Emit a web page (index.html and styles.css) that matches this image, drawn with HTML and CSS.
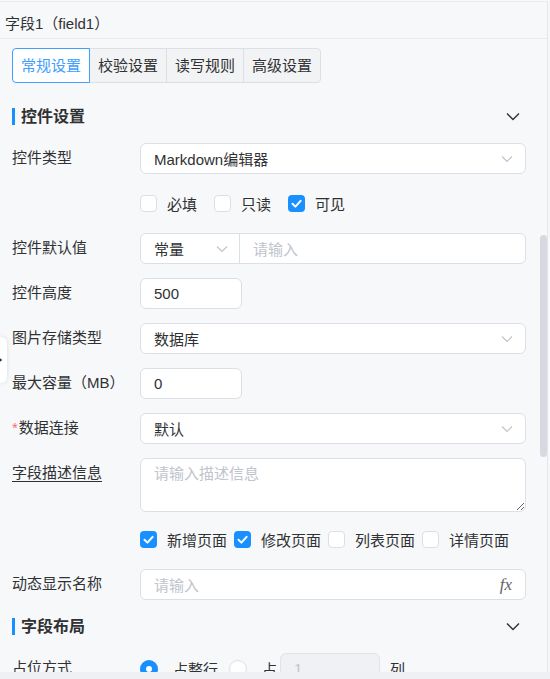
FILE: index.html
```html
<html>
    <head>
        <link rel="stylesheet" href="styles.css">
    </head>
    <body>
        <div class="panel">
            <div class="panel-head">字段1（field1）</div>

            <div class="panel-body">
                <div class="tabs">
                    <div class="tab is-active">常规设置</div>
                    <div class="tab">校验设置</div>
                    <div class="tab">读写规则</div>
                    <div class="tab">高级设置</div>
                </div>

                <!-- control settings -->
                <div class="section-head">
                    <span class="section-title">控件设置</span>
                    <svg class="section-arrow" width="14" height="14" viewBox="0 0 14 14"><path d="M1 4.5 L7 10.5 L13 4.5"/></svg>
                </div>

                <div class="form-row">
                    <div class="form-label">控件类型</div>
                    <div class="form-control">
                        <div class="select">
                            <span>Markdown编辑器</span>
                            <svg class="select-arrow" width="12" height="12" viewBox="0 0 12 12"><path d="M1 3.5 L6 8.5 L11 3.5"/></svg>
                        </div>
                    </div>
                </div>

                <div class="form-row">
                    <div class="form-label"></div>
                    <div class="form-control check-group">
                        <div class="check"><span class="check-box"></span>必填</div>
                        <div class="check"><span class="check-box"></span>只读</div>
                        <div class="check"><span class="check-box is-checked"><svg width="17" height="17" viewBox="0 0 17 17"><path d="M4.5 8.8 L7.4 11.6 L12.6 5.8"/></svg></span>可见</div>
                    </div>
                </div>

                <div class="form-row">
                    <div class="form-label">控件默认值</div>
                    <div class="form-control">
                        <div class="combo">
                            <div class="combo-select">
                                <span>常量</span>
                                <svg class="select-arrow" width="12" height="12" viewBox="0 0 12 12"><path d="M1 3.5 L6 8.5 L11 3.5"/></svg>
                            </div>
                            <div class="combo-input placeholder">请输入</div>
                        </div>
                    </div>
                </div>

                <div class="form-row">
                    <div class="form-label">控件高度</div>
                    <div class="form-control">
                        <div class="input input-short">500</div>
                    </div>
                </div>

                <div class="form-row">
                    <div class="form-label">图片存储类型</div>
                    <div class="form-control">
                        <div class="select">
                            <span>数据库</span>
                            <svg class="select-arrow" width="12" height="12" viewBox="0 0 12 12"><path d="M1 3.5 L6 8.5 L11 3.5"/></svg>
                        </div>
                    </div>
                </div>

                <div class="form-row">
                    <div class="form-label">最大容量（MB）</div>
                    <div class="form-control">
                        <div class="input input-short">0</div>
                    </div>
                </div>

                <div class="form-row">
                    <div class="form-label"><span class="required">*</span>数据连接</div>
                    <div class="form-control">
                        <div class="select">
                            <span>默认</span>
                            <svg class="select-arrow" width="12" height="12" viewBox="0 0 12 12"><path d="M1 3.5 L6 8.5 L11 3.5"/></svg>
                        </div>
                    </div>
                </div>

                <div class="form-row row-textarea">
                    <div class="form-label"><span class="label-tip">字段描述信息</span></div>
                    <div class="form-control">
                        <textarea class="textarea" placeholder="请输入描述信息"></textarea>
                    </div>
                </div>

                <div class="form-row">
                    <div class="form-label"></div>
                    <div class="form-control check-group is-tight">
                        <div class="check"><span class="check-box is-checked"><svg width="17" height="17" viewBox="0 0 17 17"><path d="M4.5 8.8 L7.4 11.6 L12.6 5.8"/></svg></span>新增页面</div>
                        <div class="check"><span class="check-box is-checked"><svg width="17" height="17" viewBox="0 0 17 17"><path d="M4.5 8.8 L7.4 11.6 L12.6 5.8"/></svg></span>修改页面</div>
                        <div class="check"><span class="check-box"></span>列表页面</div>
                        <div class="check"><span class="check-box"></span>详情页面</div>
                    </div>
                </div>

                <div class="form-row">
                    <div class="form-label">动态显示名称</div>
                    <div class="form-control">
                        <div class="input input-fx">
                            <span class="placeholder">请输入</span>
                            <span class="fx">fx</span>
                        </div>
                    </div>
                </div>

                <!-- field layout -->
                <div class="section-head is-next">
                    <span class="section-title">字段布局</span>
                    <svg class="section-arrow" width="14" height="14" viewBox="0 0 14 14"><path d="M1 4.5 L7 10.5 L13 4.5"/></svg>
                </div>

                <div class="form-row">
                    <div class="form-label">占位方式</div>
                    <div class="form-control radio-group">
                        <div class="radio"><span class="radio-dot is-checked"></span>占整行</div>
                        <div class="radio"><span class="radio-dot"></span>占</div>
                        <div class="input input-disabled">1</div>
                        <span class="unit">列</span>
                    </div>
                </div>
            </div>

            <div class="scroll-thumb"></div>
            <div class="side-handle">
                <svg width="7" height="10" viewBox="0 0 7 10"><path d="M-3 2 L1 5 L-3 8"/></svg>
            </div>
        </div>
        <div class="panel-foot"></div>
    </body>
</html>
```

FILE: styles.css
```css
body {
    margin: 0;
    padding-top: 1px;
    height: 679px;
    box-sizing: border-box;
    display: flex;
    flex-direction: column;
    overflow: hidden;

    background-color: #f7f8fa;
    color: #303133;
    font-family: "Liberation Sans", "Noto Sans CJK SC", sans-serif;
    font-size: 15px;
}

.panel {
    position: relative;
    flex: 1;
    min-height: 0;
    width: 548px;
    box-sizing: border-box;
    display: flex;
    flex-direction: column;
    overflow: hidden;

    border-top: 1px solid #ebedf0;
    border-right: 1px solid #e4e6ea;
}

.panel-head {
    flex-shrink: 0;
    height: 37px;
    box-sizing: border-box;
    padding: 8px 5px 0;
    line-height: 28px;
    border-bottom: 1px solid #e9ebef;
}

.panel-body {
    flex: 1;
    min-height: 0;
    overflow: hidden;
    padding: 0 21px 0 12px;
}

.panel-foot {
    flex-shrink: 0;
    height: 7px;
    background-color: #eff0f3;
}

/* tabs */
.tabs {
    display: flex;
    margin-top: 9px;
    height: 35px;
}

.tab {
    position: relative;
    padding: 0 8px;
    margin-left: -1px;
    line-height: 33px;
    border: 1px solid #dcdfe6;
    background-color: #f2f3f5;
}

.tab:first-child {
    margin-left: 0;
    border-radius: 4px 0 0 4px;
}

.tab:last-child {
    border-radius: 0 4px 4px 0;
}

.tab.is-active {
    z-index: 1;
    color: #409eff;
    border-color: #409eff;
    background-color: #fff;
}

/* section header */
.section-head {
    display: flex;
    align-items: center;
    justify-content: space-between;
    height: 24px;
    margin: 21px 0 15px;
}

.section-head.is-next {
    margin-top: 4px;
}

.section-title {
    padding-left: 6px;
    line-height: 17px;
    font-size: 16px;
    font-weight: bold;
    border-left: 3px solid #1890ff;
}

.section-arrow {
    margin-right: 6px;
}

.section-arrow path {
    fill: none;
    stroke: #303133;
    stroke-width: 1.4;
}

/* form rows */
.form-row {
    display: flex;
    margin-bottom: 14px;
}

.form-row.row-textarea {
    margin-bottom: 12px;
}

.form-label {
    flex-shrink: 0;
    width: 128px;
    line-height: 29px;
}

.form-control {
    flex: 1;
    display: flex;
    min-height: 31px;
}

.required {
    margin-right: 1px;
    color: #f56c6c;
}

.label-tip {
    text-decoration: underline;
    text-underline-offset: 3px;
}

.placeholder {
    color: #c0c4cc;
}

.select,
.input,
.combo {
    height: 31px;
    box-sizing: border-box;
    border: 1px solid #dcdfe6;
    border-radius: 6px;
    background-color: #fff;
}

.select {
    flex: 1;
    display: flex;
    align-items: center;
    justify-content: space-between;
    padding: 0 12px 0 13px;
}

.select-arrow path {
    fill: none;
    stroke: #c0c4cc;
    stroke-width: 1.2;
}

.input {
    display: flex;
    align-items: center;
    padding: 0 13px;
}

.input-short {
    width: 102px;
}

.input-fx {
    flex: 1;
    justify-content: space-between;
}

.fx {
    color: #606266;
    font-family: "Liberation Serif", serif;
    font-style: italic;
    font-size: 17px;
}

.combo {
    flex: 1;
    display: flex;
}

.combo-select {
    width: 99px;
    box-sizing: border-box;
    display: flex;
    align-items: center;
    justify-content: space-between;
    padding: 0 11px 0 13px;
    border-right: 1px solid #dcdfe6;
}

.combo-input {
    display: flex;
    align-items: center;
    padding: 0 13px;
}

.textarea {
    flex: 1;
    height: 54px;
    box-sizing: border-box;
    padding: 5px 13px;
    resize: vertical;
    outline: none;

    font-family: inherit;
    font-size: 15px;
    line-height: 20px;
    color: #303133;
    border: 1px solid #dcdfe6;
    border-radius: 6px;
    background-color: #fff;
}

.textarea::placeholder {
    color: #c0c4cc;
}

/* checkboxes */
.check-group {
    align-items: center;
}

.check {
    display: flex;
    align-items: center;
    gap: 10px;
    margin-right: 17px;
}

.check-group.is-tight .check {
    margin-right: 7px;
}

.check-box {
    width: 17px;
    height: 17px;
    box-sizing: border-box;
    border: 1px solid #dcdfe6;
    border-radius: 4px;
    background-color: #fff;
}

.check-box.is-checked {
    border: none;
    background-color: #1890ff;
}

.check-box svg {
    display: block;
}

.check-box path {
    fill: none;
    stroke: #fff;
    stroke-width: 2;
    stroke-linecap: round;
    stroke-linejoin: round;
}

/* radios */
.radio-group {
    align-items: center;
}

.radio {
    display: flex;
    align-items: center;
    gap: 15px;
    margin-right: 11px;
}

.radio + .radio {
    margin-right: 3px;
}

.radio-dot {
    width: 18px;
    height: 18px;
    box-sizing: border-box;
    border: 1px solid #dcdfe6;
    border-radius: 50%;
    background-color: #fff;
}

.radio-dot.is-checked {
    border: 6px solid #1890ff;
}

.input-disabled {
    width: 100px;
    color: #c0c4cc;
    background-color: #f0f1f4;
    border-color: #e1e3e8;
}

.unit {
    margin-left: 10px;
}

/* overlays */
.scroll-thumb {
    position: absolute;
    top: 233px;
    right: 0;
    width: 7px;
    height: 222px;
    border-radius: 4px;
    background-color: #d6d9df;
}

.side-handle {
    position: absolute;
    top: 335px;
    left: 0;
    width: 7px;
    height: 46px;
    display: flex;
    align-items: center;
    border-radius: 0 6px 6px 0;
    background-color: #fff;
    box-shadow: 0 0 4px rgba(0, 0, 0, 0.12);
}

.side-handle path {
    fill: none;
    stroke: #303133;
    stroke-width: 1.5;
}
```
